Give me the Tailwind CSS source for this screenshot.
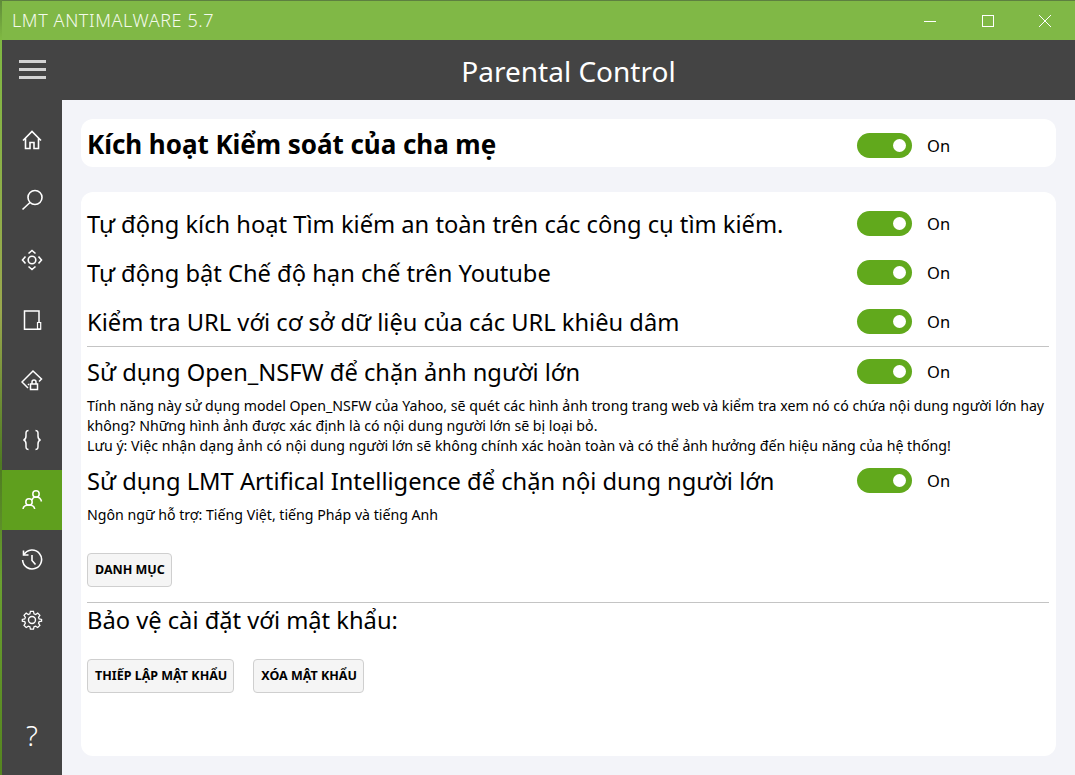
<!DOCTYPE html>
<html lang="vi">
<head>
<meta charset="utf-8">
<script src="https://cdn.jsdelivr.net/npm/@tailwindcss/browser@4"></script>
</head>
<body class="m-0 h-[775px] w-[1075px] overflow-hidden bg-[#444444] font-['Noto_Sans',sans-serif]">
<div class="flex h-[775px] w-[1075px]">
  <div class="w-[2px] shrink-0 bg-[linear-gradient(180deg,#5f8a3a_0%,#7fb842_5%,#9aa84e_40%,#4e7a22_60%,#6aa030_75%,#55851f_100%)]"></div>
  <div class="flex min-w-0 flex-1 flex-col">
    <div class="flex h-[40px] shrink-0 items-center justify-between border-t border-[#5d7f40] bg-[#80b846] pl-[10px] text-[#f4faec]">
      <span class="text-[18px] font-light tracking-[0.6px]">LMT ANTIMALWARE 5.7</span>
      <div class="flex items-center text-white">
        <div class="flex h-[38px] w-[58px] items-center justify-center"><svg width="14" height="14" viewBox="0 0 14 14" fill="none" stroke="currentColor"><path d="M1 7.500h12"/></svg></div>
        <div class="flex h-[38px] w-[58px] items-center justify-center"><svg width="12" height="12" viewBox="0 0 12 12" fill="none" stroke="currentColor"><rect x=".5" y=".5" width="11" height="11"/></svg></div>
        <div class="flex h-[38px] w-[58px] items-center justify-center pr-[2px]"><svg width="14" height="14" viewBox="0 0 14 14" fill="none" stroke="currentColor"><path d="M1 1l12 12M13 1L1 13"/></svg></div>
      </div>
    </div>
    <div class="relative flex h-[60px] shrink-0 items-center justify-center bg-[#444444] pl-[60px] pt-[2px]">
      <div class="absolute left-[17px] top-[20px] flex w-[27px] flex-col gap-[5px]">
        <div class="h-[3px] bg-[#d4d4d4]"></div><div class="h-[3px] bg-[#d4d4d4]"></div><div class="h-[3px] bg-[#d4d4d4]"></div>
      </div>
      <h1 class="text-[28px] font-normal text-white">Parental Control</h1>
    </div>
    <div class="flex min-h-0 flex-1">
      <nav class="flex w-[60px] shrink-0 flex-col bg-[#444444] pt-[10px] text-white">
        <div class="flex h-[60px] items-center justify-center"><svg width="22" height="22" viewBox="0 0 22 22" fill="none" stroke="currentColor" stroke-width="1.600"><path d="M2 11.500 11 2.500l9 9M4.500 9.500V19.500h4.500v-6h4v6h4.500V9.500"/></svg></div>
        <div class="flex h-[60px] items-center justify-center"><svg width="22" height="22" viewBox="0 0 22 22" fill="none" stroke="currentColor" stroke-width="1.600"><circle cx="14" cy="8.500" r="7"/><path d="M9 13.500 1.500 20.500"/></svg></div>
        <div class="flex h-[60px] items-center justify-center"><svg width="22" height="22" viewBox="0 0 22 22" fill="none" stroke="currentColor" stroke-width="1.600"><circle cx="11" cy="11" r="3.800"/><path d="M7.500 4.500 11 1.500 14.500 4.500M7.500 17.500 11 20.500 14.500 17.500M4.500 7.500 1.500 11 4.500 14.500M17.500 7.500 20.500 11 17.500 14.500"/></svg></div>
        <div class="flex h-[60px] items-center justify-center"><svg width="22" height="22" viewBox="0 0 22 22" fill="none" stroke="currentColor" stroke-width="1.500"><path d="M18 13V2H3.500V20.200H19.500"/><path d="M16.500 13.500h3.200v6.700h-3.200z" stroke-width="1.200"/></svg></div>
        <div class="flex h-[60px] items-center justify-center"><svg width="22" height="22" viewBox="0 0 22 22" fill="none" stroke="currentColor" stroke-width="1.500"><path d="M7 19 1 13 12 2l8.500 8-2.500 2.500"/><path d="M8 15l-1 1" /><rect x="9.500" y="15" width="7" height="5.500"/><path d="M11 15v-2a2 2 0 0 1 4 0v2"/></svg></div>
        <div class="flex h-[60px] items-center justify-center"><svg width="22" height="24" viewBox="0 0 22 24" fill="none" stroke="currentColor" stroke-width="1.500"><path d="M7.500 2.500C4.500 2.500 5 5 5 8c0 2.500-.5 3.500-2.500 4 2 .5 2.500 1.500 2.500 4 0 3-.5 5.500 2.500 5.500M14.500 2.500c3 0 2.500 2.500 2.500 5.500 0 2.500.5 3.500 2.500 4-2 .5-2.500 1.500-2.500 4 0 3 .5 5.500-2.500 5.500"/></svg></div>
        <div class="flex h-[60px] items-center justify-center bg-[#5f9f1e]"><svg width="22" height="22" viewBox="0 0 22 22" fill="none" stroke="currentColor" stroke-width="1.500"><circle cx="8" cy="13" r="3.200"/><path d="M2 20c.3-2.500 2.500-4 6-4s5.300 1.500 5.700 4"/><circle cx="15" cy="5" r="3.200"/><path d="M11 11c.5-1.800 2-3 4-3 3 0 5 1.800 5.500 4.500"/></svg></div>
        <div class="flex h-[60px] items-center justify-center"><svg width="22" height="22" viewBox="0 0 22 22" fill="none" stroke="currentColor" stroke-width="1.600"><path d="M3 5.500A9.500 9.500 0 1 1 1.600 11"/><path d="M2.500 1.500v4.500h5" /><path d="M11 6v5.500l3.500 4"/></svg></div>
        <div class="flex h-[60px] items-center justify-center"><svg width="22" height="22" viewBox="0 0 22 22" fill="none" stroke="currentColor" stroke-width="1.400"><circle cx="11" cy="11" r="3.500"/><path d="M9.300 1.500h3.400l.6 2.700 1.700.7 2.400-1.500 2.400 2.400-1.500 2.400.7 1.700 2.700.6v1.800l-2.700.6-.7 1.700 1.500 2.400-2.400 2.400-2.400-1.500-1.700.7-.6 2.700H9.300l-.6-2.700-1.700-.7-2.400 1.500-2.400-2.400 1.500-2.400-.7-1.700-2.700-.6V10.500l2.700-.6.7-1.700-1.500-2.400 2.400-2.400 2.400 1.500 1.700-.7z" transform="translate(1.050 1.050) scale(.9)"/></svg></div>
        <div class="mt-auto flex h-[80px] items-start justify-center pt-[22px] text-[28px] font-light leading-[36px] text-white">?</div>
      </nav>
      <main class="flex min-w-0 flex-1 flex-col bg-[#f3f4f9] p-[19px] text-black">
        <section class="flex h-[48px] shrink-0 items-center rounded-[12px] bg-white pl-[6px] pt-[4px]">
          <h2 class="w-[770px] shrink-0 pb-[2px] text-[26px] font-bold tracking-[-0.05px]">Kích hoạt Kiểm soát của cha mẹ</h2>
          <div class="relative h-[25px] w-[55px] shrink-0 rounded-full bg-[#61a91c]"><span class="absolute right-[6px] top-[6px] h-[13px] w-[13px] rounded-full bg-white"></span></div>
          <span class="ml-[15px] pt-[2px] text-[16.500px]">On</span>
        </section>
        <section class="mt-[25px] flex min-h-0 flex-1 flex-col rounded-[12px] bg-white pl-[6px] pr-[7px] pt-[7px]">
          <div class="flex h-[49px] shrink-0 items-center">
            <span class="w-[770px] shrink-0 pt-[3px] text-[23.700px]">Tự động kích hoạt Tìm kiếm an toàn trên các công cụ tìm kiếm.</span>
            <div class="relative h-[25px] w-[55px] shrink-0 rounded-full bg-[#61a91c]"><span class="absolute right-[6px] top-[6px] h-[13px] w-[13px] rounded-full bg-white"></span></div>
            <span class="ml-[15px] pt-[2px] text-[16.500px]">On</span>
          </div>
          <div class="flex h-[49px] shrink-0 items-center">
            <span class="w-[770px] shrink-0 pt-[3px] text-[23.700px]">Tự động bật Chế độ hạn chế trên Youtube</span>
            <div class="relative h-[25px] w-[55px] shrink-0 rounded-full bg-[#61a91c]"><span class="absolute right-[6px] top-[6px] h-[13px] w-[13px] rounded-full bg-white"></span></div>
            <span class="ml-[15px] pt-[2px] text-[16.500px]">On</span>
          </div>
          <div class="flex h-[50px] shrink-0 items-center border-b border-[#c4c4c4]">
            <span class="w-[770px] shrink-0 pt-[3px] text-[23.700px]">Kiểm tra URL với cơ sở dữ liệu của các URL khiêu dâm</span>
            <div class="relative h-[25px] w-[55px] shrink-0 rounded-full bg-[#61a91c]"><span class="absolute right-[6px] top-[6px] h-[13px] w-[13px] rounded-full bg-white"></span></div>
            <span class="ml-[15px] pt-[2px] text-[16.500px]">On</span>
          </div>
          <div class="flex h-[49px] shrink-0 items-center">
            <span class="w-[770px] shrink-0 pt-[2px] text-[23.700px]">Sử dụng Open_NSFW để chặn ảnh người lớn</span>
            <div class="relative h-[25px] w-[55px] shrink-0 rounded-full bg-[#61a91c]"><span class="absolute right-[6px] top-[6px] h-[13px] w-[13px] rounded-full bg-white"></span></div>
            <span class="ml-[15px] pt-[2px] text-[16.500px]">On</span>
          </div>
          <p class="text-[14.170px] leading-[20px]">Tính năng này sử dụng model Open_NSFW của Yahoo, sẽ quét các hình ảnh trong trang web và kiểm tra xem nó có chứa nội dung người lớn hay không? Những hình ảnh được xác định là có nội dung người lớn sẽ bị loại bỏ.<br>Lưu ý: Việc nhận dạng ảnh có nội dung người lớn sẽ không chính xác hoàn toàn và có thể ảnh hưởng đến hiệu năng của hệ thống!</p>
          <div class="flex h-[49px] shrink-0 items-center">
            <span class="w-[770px] shrink-0 pt-[2px] text-[23.700px]">Sử dụng LMT Artifical Intelligence để chặn nội dung người lớn</span>
            <div class="relative h-[25px] w-[55px] shrink-0 rounded-full bg-[#61a91c]"><span class="absolute right-[6px] top-[6px] h-[13px] w-[13px] rounded-full bg-white"></span></div>
            <span class="ml-[15px] pt-[2px] text-[16.500px]">On</span>
          </div>
          <p class="text-[14.170px] leading-[20px]">Ngôn ngữ hỗ trợ: Tiếng Việt, tiếng Pháp và tiếng Anh</p>
          <div class="mt-[28px]"><button class="h-[34px] rounded-[4px] border border-[#cfcfcf] bg-[#f5f5f5] pl-[7px] pr-[6px] text-[12.500px] font-bold">DANH MỤC</button></div>
          <div class="mt-[15px] border-t border-[#c4c4c4] text-[23.700px] leading-[34px]">Bảo vệ cài đặt với mật khẩu:</div>
          <div class="mt-[22px] flex gap-[19px]">
            <button class="h-[34px] rounded-[4px] border border-[#cfcfcf] bg-[#f5f5f5] pl-[7px] pr-[6px] text-[12.500px] font-bold">THIẾP LẬP MẬT KHẨU</button>
            <button class="h-[34px] rounded-[4px] border border-[#cfcfcf] bg-[#f5f5f5] pl-[7px] pr-[6px] text-[12.500px] font-bold">XÓA MẬT KHẨU</button>
          </div>
        </section>
      </main>
    </div>
  </div>
</div>
</body>
</html>
